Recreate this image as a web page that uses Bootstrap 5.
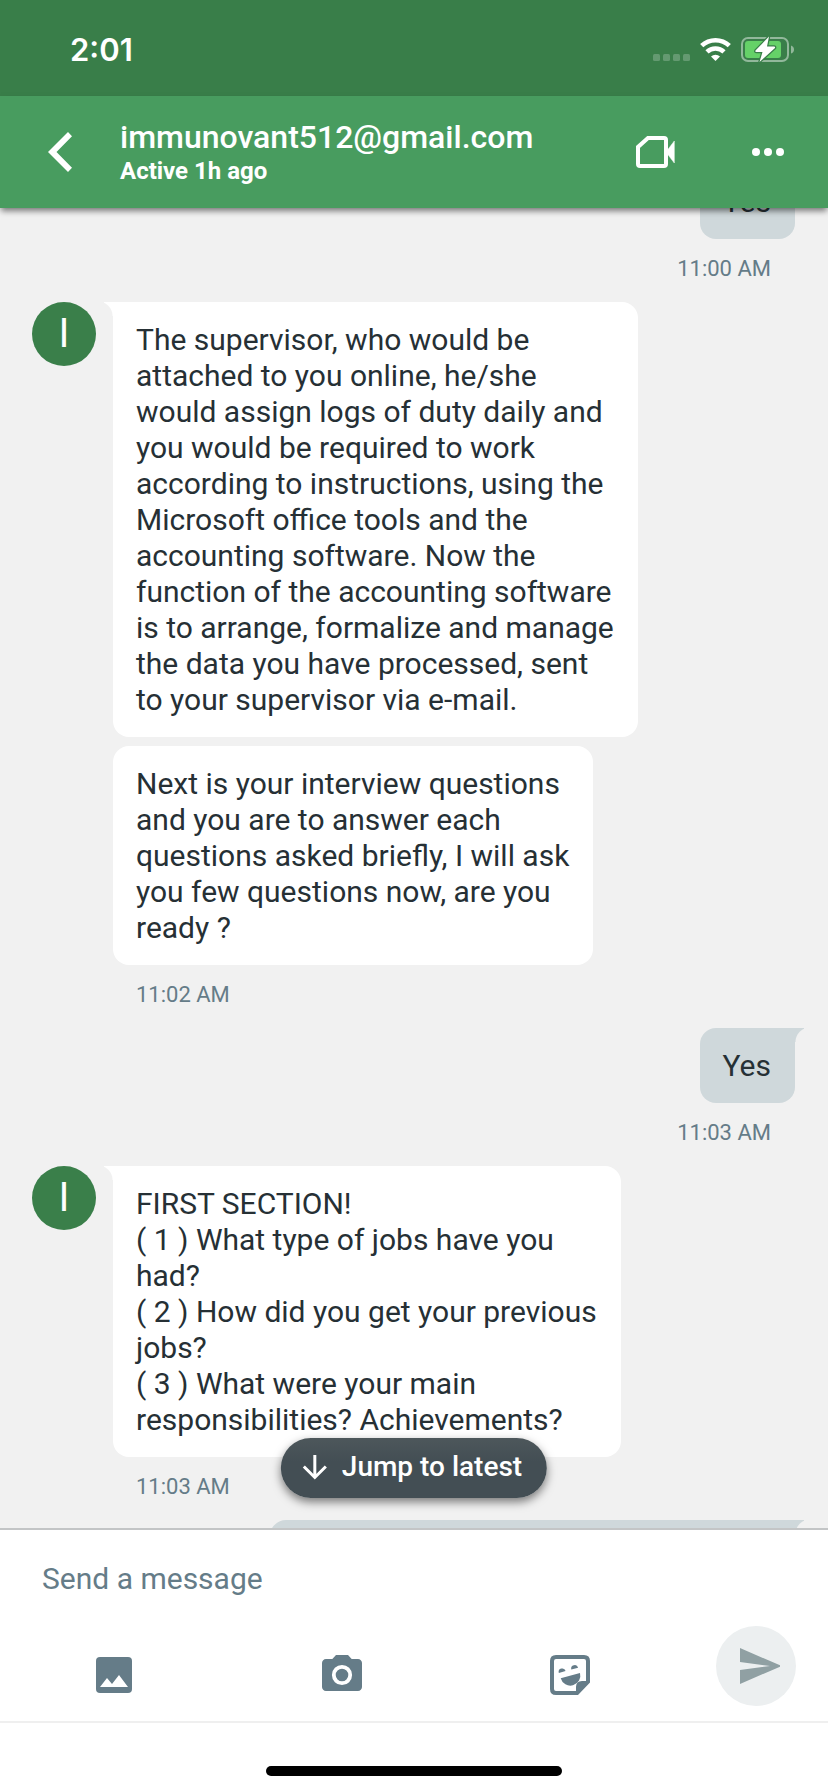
<!DOCTYPE html>
<html lang="en">
<head>
<meta charset="utf-8">
<meta name="viewport" content="width=device-width, initial-scale=1">
<title>Chat</title>
<link href="https://cdn.jsdelivr.net/npm/bootstrap@5.3.0/dist/css/bootstrap.min.css" rel="stylesheet">
<style>
  body { font-family: Roboto, "Liberation Sans", sans-serif; font-size: 30px; line-height: 36px; color: #263035; background: #fff; }
  svg { display: block; }
  .status-bar { background: #397e49; padding: 32px 32px 28px 70px; }
  .clock { font-family: Inter, "Liberation Sans", sans-serif; font-size: 31px; font-weight: 600; }
  .status-icons { gap: 10px; }
  .app-bar { background: #489c5f; height: 112px; padding: 0 36px; z-index: 2; box-shadow: 0 4px 6px -1px rgba(0,0,0,.5); }
  .plain-btn { background: none; border: 0; padding: 0; color: inherit; }
  .who { margin-left: 36px; }
  .who-name { font-size: 32px; font-weight: 500; line-height: 38px; margin: 0; }
  .who-seen { font-size: 24px; font-weight: 700; line-height: 30px; }
  .app-actions { gap: 64px; }
  .chat { background: #f1f1f1; flex: 1 1 0; min-height: 0; }
  .thread { margin-top: -44px; }
  .stamp { font-size: 22px; line-height: 26px; padding: 17px 24px 20px 23px; color: #657c88; }
  .incoming { padding-left: 32px; gap: 17px; }
  .outgoing { padding-right: 33px; }
  .avatar { width: 64px; height: 64px; background: #3a7f4a; font-size: 40px; }
  .bubble { position: relative; padding: 20px 24px 19px 23px; border-radius: 16px; background: #fff; }
  .bubble + .bubble { margin-top: 9px; }
  .outgoing .bubble { background: #cfd8db; }
  .tail::before { content: ""; position: absolute; top: 0; width: 9px; height: 14px; }
  .incoming .tail { border-top-left-radius: 0; }
  .incoming .tail::before { right: 100%; background: radial-gradient(circle at -6px 14px, transparent 14px, #fff 15px); }
  .outgoing .tail { border-top-right-radius: 0; }
  .outgoing .tail::before { left: 100%; background: radial-gradient(circle at 15px 14px, transparent 14px, #cfd8db 15px); }
  .long { width: 525px; min-height: 112px; }
  .jump { bottom: 30px; height: 60px; padding: 0 25px 3px 20px; gap: 13px; border: 0; background: linear-gradient(#4d575b, #434e54 40%); color: #fff; font-size: 28px; font-weight: 500; box-shadow: 0 4px 10px rgba(0,0,0,.5); }
  .composer { border-top: 2px solid #c3c5c6; border-bottom: 2px solid #efefef; z-index: 1; color: #657c88; }
  .composer input { border: 0; outline: 0; background: none; padding: 30px 42px; color: inherit; line-height: 36px; height: 96px; }
  .composer input::placeholder { color: #657c88; opacity: 1; }
  .tool { padding: 25px 0 22px; }
  .send-col { width: 144px; }
  .send { width: 80px; height: 80px; background: #eceff0; color: #90a0a3; }
  .home-bar { height: 69px; padding-top: 43px; }
  .home-bar span { width: 296px; height: 10px; background: #000; }
</style>
</head>
<body>
<div class="d-flex flex-column vh-100">
  <div class="status-bar d-flex justify-content-between align-items-center text-white flex-shrink-0">
    <span class="clock">2:01</span>
    <div class="status-icons d-flex align-items-center">
      <svg width="37" height="28" viewBox="0 0 37 28" fill="#fff" fill-opacity=".22"><rect y="18" width="7" height="7" rx="1.5"/><rect x="10" y="18" width="7" height="7" rx="1.5"/><rect x="20" y="18" width="7" height="7" rx="1.5"/><rect x="30" y="18" width="7" height="7" rx="1.5"/></svg>
      <svg width="31" height="28" viewBox="0 0 31 28" fill="none" stroke="#fff" stroke-width="4.6"><path d="M1.700 9.700a20 20 0 0 1 27.600 0M7 15.800a12.400 12.400 0 0 1 17 0"/><path d="M11 20.500a6.500 6.500 0 0 1 9 0L15.500 25z" fill="#fff" stroke="none"/></svg>
      <svg width="55" height="28" viewBox="0 0 55 28"><rect x="1" y="2" width="46" height="23" rx="6" fill="none" stroke="#fff" stroke-opacity=".45" stroke-width="2"/><path d="M50 9.500q3 1 3 4t-3 4z" fill="#fff" fill-opacity=".45"/><rect x="4" y="5" width="36" height="17" rx="3" fill="#65d168"/><path d="M28 .5L14.500 14.500q-.8 1.500 1 1.500h6l-3 10L34 12q.5-1.300-1-1.500h-7z" fill="#fff" stroke="#397e49" stroke-width="2.500" paint-order="stroke"/></svg>
    </div>
  </div>

  <header class="app-bar position-relative d-flex align-items-center text-white flex-shrink-0">
    <button class="plain-btn" type="button" aria-label="Back">
      <svg width="48" height="48" viewBox="0 0 48 48" fill="currentColor"><path d="M32 4l4 4.300L20.500 24 36 39.700 32 44 12 24z"/></svg>
    </button>
    <div class="who flex-grow-1">
      <h1 class="who-name">immunovant512@gmail.com</h1>
      <div class="who-seen">Active 1h ago</div>
    </div>
    <div class="app-actions d-flex">
      <button class="plain-btn" type="button" aria-label="Video call">
        <svg width="48" height="48" viewBox="0 0 48 48"><path d="M16 10h16q2 0 2 2v24q0 2-2 2H8q-2 0-2-2V19z" fill="none" stroke="currentColor" stroke-width="4"/><path d="M34 24l8.300-11v22z" fill="currentColor" stroke="currentColor" stroke-width=".5"/></svg>
      </button>
      <button class="plain-btn" type="button" aria-label="More options">
        <svg width="48" height="48" viewBox="0 0 48 48" fill="currentColor"><circle cx="12" cy="24" r="4"/><circle cx="24" cy="24" r="4"/><circle cx="36" cy="24" r="4"/></svg>
      </button>
    </div>
  </header>

  <main class="chat position-relative overflow-hidden">
    <div class="thread d-flex flex-column">
      <div class="outgoing d-flex flex-column align-items-end">
        <div class="bubble tail">Yes</div>
        <time class="stamp">11:00 AM</time>
      </div>
      <div class="incoming d-flex align-items-start">
        <div class="avatar rounded-circle d-flex align-items-center justify-content-center text-white flex-shrink-0">I</div>
        <div class="d-flex flex-column align-items-start">
          <div class="bubble tail">The supervisor, who would be<br>attached to you online, he/she<br>would assign logs of duty daily and<br>you would be required to work<br>according to instructions, using the<br>Microsoft office tools and the<br>accounting software. Now the<br>function of the accounting software<br>is to arrange, formalize and manage<br>the data you have processed, sent<br>to your supervisor via e-mail.</div>
          <div class="bubble">Next is your interview questions<br>and you are to answer each<br>questions asked briefly, I will ask<br>you few questions now, are you<br>ready ?</div>
          <time class="stamp">11:02 AM</time>
        </div>
      </div>
      <div class="outgoing d-flex flex-column align-items-end">
        <div class="bubble tail">Yes</div>
        <time class="stamp">11:03 AM</time>
      </div>
      <div class="incoming d-flex align-items-start">
        <div class="avatar rounded-circle d-flex align-items-center justify-content-center text-white flex-shrink-0">I</div>
        <div class="d-flex flex-column align-items-start">
          <div class="bubble tail">FIRST SECTION!<br>( 1 ) What type of jobs have you<br>had?<br>( 2 ) How did you get your previous<br>jobs?<br>( 3 ) What were your main<br>responsibilities? Achievements?</div>
          <time class="stamp">11:03 AM</time>
        </div>
      </div>
      <div class="outgoing d-flex flex-column align-items-end">
        <div class="bubble tail long"></div>
      </div>
    </div>
    <button class="jump position-absolute start-50 translate-middle-x rounded-pill d-flex align-items-center text-nowrap" type="button">
      <svg width="28" height="28" viewBox="0 0 28 28" fill="none" stroke="currentColor" stroke-width="3"><path d="M14 2v22M3 13.500l11 11 11-11"/></svg>
      Jump to latest
    </button>
  </main>

  <form class="composer position-relative bg-white flex-shrink-0">
    <input class="w-100 d-block" type="text" placeholder="Send a message" aria-label="Send a message">
    <div class="d-flex align-items-start">
      <button class="plain-btn tool flex-fill d-flex justify-content-center" type="button" aria-label="Attach image">
        <svg width="48" height="48" viewBox="0 0 48 48"><rect x="6" y="6" width="36" height="36" rx="4" fill="currentColor"/><path d="M10 36l7-9 5 6 7-9 9 12z" fill="#fff"/></svg>
      </button>
      <button class="plain-btn tool flex-fill d-flex justify-content-center" type="button" aria-label="Take photo">
        <svg width="48" height="48" viewBox="0 0 48 48"><path d="M18 4l-3.660 4H8c-2.200 0-4 1.800-4 4v24c0 2.200 1.800 4 4 4h32c2.200 0 4-1.800 4-4V12c0-2.200-1.800-4-4-4h-6.340L30 4z" fill="currentColor"/><circle cx="24" cy="24" r="8.200" fill="none" stroke="#fff" stroke-width="3.800"/></svg>
      </button>
      <button class="plain-btn tool flex-fill d-flex justify-content-center" type="button" aria-label="Stickers">
        <svg width="48" height="48" viewBox="0 0 48 48" fill="currentColor"><path d="M10 4h28q6 0 6 6v21.500L32 44H10q-6 0-6-6V10q0-6 6-6zm0 4q-2 0-2 2v28q0 2 2 2h20v-4q0-6 6-6h4V10q0-2-2-2z" fill-rule="evenodd"/><path d="M12.800 21.900a3.500 3.500 0 0 1 6.800-1.800zM25.300 18.500a3.500 3.500 0 0 1 6.800-1.800zM14.700 27.300L34 22a10 10 0 0 1-19.300 5.300z"/></svg>
      </button>
      <div class="send-col d-flex justify-content-center flex-shrink-0">
        <button class="plain-btn send rounded-circle d-flex align-items-center justify-content-center" type="submit" aria-label="Send">
          <svg width="48" height="48" viewBox="0 0 48 48" fill="currentColor"><path d="M8 6l41.500 18L8 42V28l30-4-30-4z"/></svg>
        </button>
      </div>
    </div>
  </form>
  <div class="home-bar bg-white d-flex justify-content-center flex-shrink-0"><span class="rounded-pill"></span></div>
</div>
<script src="https://cdn.jsdelivr.net/npm/bootstrap@5.3.0/dist/js/bootstrap.bundle.min.js"></script>
</body>
</html>
